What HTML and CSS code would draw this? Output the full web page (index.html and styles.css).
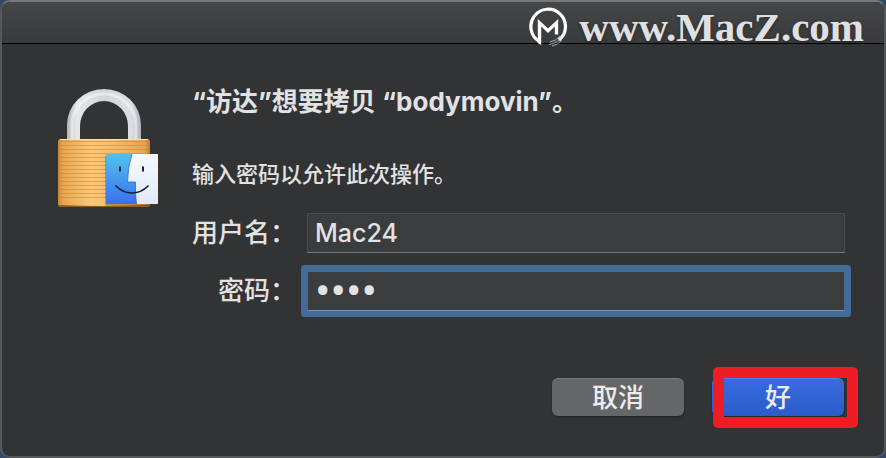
FILE: index.html
```html
<!DOCTYPE html>
<html lang="zh-CN">
<head>
  <meta charset="utf-8">
  <title>访达</title>
  <link rel="stylesheet" href="styles.css">
</head>
<body>
  <main class="window">
    <header class="titlebar">
      <a class="brand" href="#">
        <svg class="brand-logo" viewBox="0 0 40 40" aria-hidden="true">
          <path d="M11.500 34.500 A17.300 17.300 0 1 1 31 33" fill="none" stroke="#fff" stroke-width="3.200"/>
          <path d="M9.800 12 L20 21.500 L30.200 12 V27.500 H26.800 V19.500 L20 26 L13.200 19.500 V38 L9.800 36 Z" fill="#fff"/>
          <path d="M33 30 Q30 36 21 37.500 M32 29 Q28 34 22 35 M34 33 Q30 38 24 39" fill="none" stroke="#c4c5c7" stroke-width="0.800"/>
        </svg>
        <span>www.MacZ.com</span>
      </a>
    </header>

    <form class="content">
      <svg class="lock" viewBox="0 0 104 122" aria-hidden="true">
        <defs>
          <linearGradient id="steel" x1="0" x2="1" y1="0" y2="0">
            <stop offset="0" stop-color="#b4b6bb"/>
            <stop offset="0.13" stop-color="#e6e7ea"/>
            <stop offset="0.5" stop-color="#d4d6da"/>
            <stop offset="0.87" stop-color="#dcdee2"/>
            <stop offset="1" stop-color="#b0b2b8"/>
          </linearGradient>
          <linearGradient id="brass" x1="0" x2="1" y1="0" y2="0">
            <stop offset="0" stop-color="#c98a38"/>
            <stop offset="0.06" stop-color="#e8a74f"/>
            <stop offset="0.35" stop-color="#fbc878"/>
            <stop offset="0.7" stop-color="#f3b865"/>
            <stop offset="0.94" stop-color="#e6a44e"/>
            <stop offset="1" stop-color="#bd8034"/>
          </linearGradient>
          <linearGradient id="face" x1="0" x2="0" y1="0" y2="1">
            <stop offset="0" stop-color="#4fc3ed"/>
            <stop offset="1" stop-color="#3a6ff0"/>
          </linearGradient>
          <linearGradient id="pale" x1="0" x2="0" y1="0" y2="1">
            <stop offset="0" stop-color="#f7f8fb"/>
            <stop offset="1" stop-color="#dfe9f8"/>
          </linearGradient>
          <pattern id="grooves" width="8" height="4" patternUnits="userSpaceOnUse">
            <rect y="2" width="8" height="1" fill="#c98332" opacity="0.55"/>
          </pattern>
        </defs>
        <path d="M10 56 V38 A37 36 0 0 1 84 38 V56 H71 V39 A24 25 0 0 0 23 39 V56 Z" fill="url(#steel)"/>
        <path d="M15 54 V38 A32 31 0 0 1 79 38 V54" fill="none" stroke="#fafafa" stroke-width="3" opacity="0.5"/>
        <rect x="1" y="52" width="92" height="68" rx="3" fill="url(#brass)"/>
        <rect x="2" y="54" width="90" height="60" fill="url(#grooves)"/>
        <path d="M3 52.500 H91" stroke="#ffe0a6"/>
        <path d="M2 118 Q47 120 92 118 V119 Q92 120 90 120 H4 Q2 120 2 119 Z" fill="#8f5c22"/>
        <rect x="48" y="68" width="54" height="51" rx="2" fill="#563915" opacity="0.35"/>
        <rect x="49" y="67" width="52" height="50" rx="1" fill="url(#face)"/>
        <path d="M75 67 H100 Q101 67 101 68 V116 Q101 117 100 117 H79.500 Q78 107 78.500 95 H70.500 Q71 79 75 67 Z" fill="url(#pale)"/>
        <path d="M75 67 Q71 79 70.500 95 H78.500 Q78 107 79.500 117" fill="none" stroke="#285ba8" stroke-width="0.700"/>
        <path d="M63 79.500 V84.500 M86 79.500 V84.500" stroke="#142139" stroke-width="2"/>
        <path d="M59 99 Q66 106 75 106 Q84 106 91 99" fill="none" stroke="#142139" stroke-width="1.700" stroke-linecap="round"/>
      </svg>

      <div class="details">
        <h1 class="title">“访达”想要拷贝 “bodymovin”。</h1>
        <p class="message">输入密码以允许此次操作。</p>

        <div class="fields">
          <label for="username">用户名：</label>
          <input class="field" id="username" type="text" value="Mac24">
          <label for="password">密码：</label>
          <input class="field password" id="password" type="password" value="1234">
        </div>

        <div class="actions">
          <button class="button" type="button">取消</button>
          <div class="marked">
            <button class="button primary" type="button">好</button>
            <span class="marker"></span>
          </div>
        </div>
      </div>
    </form>
  </main>
</body>
</html>
```

FILE: styles.css
```css
* {
  box-sizing: border-box;
}

body {
  margin: 0;
  background: #34486a;
  color: #e2e2e3;
  font-family: Inter, "Noto Sans CJK SC", sans-serif;
  font-weight: 500;
}

.window {
  min-height: 100vh;
  border: 2px solid #57585a;
  border-top-color: #77787a;
  border-radius: 10px;
  background: #323335;
  overflow: hidden;
}

.titlebar {
  display: flex;
  justify-content: flex-end;
  height: 42px;
  padding-right: 20px;
  border-bottom: 1px solid #000;
  background: linear-gradient(#454648, #393a3c);
}

.brand {
  display: flex;
  align-items: center;
  gap: 11px;
  height: 50px;
  color: #e0e0e2;
  font: bold 41px/48px "Liberation Serif", serif;
  text-decoration: none;
  text-shadow: 0 1px 3px #222;
}

.brand-logo {
  width: 40px;
  height: 40px;
}

.content {
  display: flex;
  gap: 31px;
  padding: 40px 39px 0 55px;
}

.lock {
  flex: none;
  width: 104px;
  height: 122px;
  margin-top: 3px;
}

.details {
  flex: 1;
}

.title {
  margin: 0;
  font-size: 26px;
  font-weight: 700;
  line-height: 36px;
}

.message {
  margin: 38px 0 0;
  font-size: 22px;
  line-height: 32px;
}

.fields {
  display: grid;
  grid-template-columns: auto 1fr;
  gap: 18px 11px;
  align-items: center;
  margin-top: 23px;
  font-size: 26px;
  line-height: 40px;
}

.fields label {
  text-align: right;
}

.field {
  width: 100%;
  height: 40px;
  padding: 0 7px;
  border: 1px solid #4b4c4e;
  border-bottom-color: #777879;
  border-radius: 0;
  outline: none;
  background: #3b3c3e;
  color: inherit;
  font: 500 25px/38px Inter, sans-serif;
}

.password {
  border-color: #436c98;
  border-bottom-color: #7d96b0;
  border-radius: 1px;
  box-shadow: 0 0 0 6px #436c98;
  font: 46px/38px Roboto, sans-serif;
}

.actions {
  display: flex;
  justify-content: flex-end;
  gap: 28px;
  margin-top: 67px;
  padding-right: 1px;
}

.button {
  display: block;
  width: 132px;
  height: 38px;
  padding: 0 0 4px;
  border: 0;
  border-top: 1px solid #7b7c7d;
  border-radius: 6px;
  background: #656668;
  box-shadow: 0 1px 2px #202123;
  color: #ececed;
  font: 500 26px/32px "Noto Sans CJK SC", sans-serif;
}

.primary {
  border-top-color: #4d7ce6;
  background: linear-gradient(#376be0, #2d5cc9);
}

.marked {
  position: relative;
}

/* red frame drawn over the default button */
.marker {
  position: absolute;
  inset: -11px -14px -12px 1px;
  border: 11px solid #ee1c25;
  border-radius: 5px;
  pointer-events: none;
}
```
